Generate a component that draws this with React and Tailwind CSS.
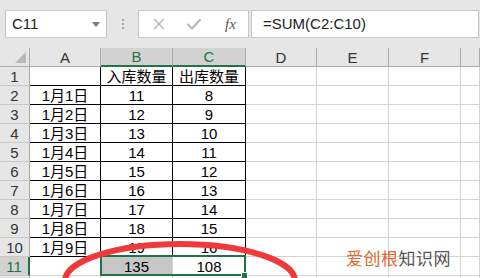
import React from "react";

const cols = ["A", "B", "C", "D", "E", "F", ""];

const data = {
  1: ["", "入库数量", "出库数量"],
  2: ["1月1日", "11", "8"],
  3: ["1月2日", "12", "9"],
  4: ["1月3日", "13", "10"],
  5: ["1月4日", "14", "11"],
  6: ["1月5日", "15", "12"],
  7: ["1月6日", "16", "13"],
  8: ["1月7日", "17", "14"],
  9: ["1月8日", "18", "15"],
  10: ["1月9日", "19", "16"],
  11: ["", "135", "108"],
};

const font = { fontFamily: '"Liberation Sans", "Noto Sans CJK SC", sans-serif' };

function ColHeader({ label }) {
  const selected = label === "B" || label === "C";
  return (
    <div
      className={
        selected
          ? "h-[19px] bg-[#d2d2d2] text-[#217346] border-r border-r-[#ababab] border-b-2 border-b-[#217346] flex items-center justify-center text-[15px] leading-none"
          : "h-[19px] bg-[#e6e6e6] text-[#333] border-r border-r-[#ababab] border-b border-b-[#ababab] flex items-center justify-center text-[15px] leading-none"
      }
    >
      {label}
    </div>
  );
}

function RowHeader({ r }) {
  const selected = r === 11;
  return (
    <div
      className={
        selected
          ? "h-[19px] bg-[#d2d2d2] text-[#217346] border-r-2 border-r-[#217346] border-b border-b-[#c8c8c8] flex items-center justify-center text-[15px] leading-none"
          : "h-[19px] bg-[#e6e6e6] text-[#333] border-r border-r-[#ababab] border-b border-b-[#c8c8c8] flex items-center justify-center text-[15px] leading-none"
      }
    >
      {r <= 11 ? r : ""}
    </div>
  );
}

function Cell({ r, c }) {
  const inTable = r >= 1 && r <= 10 && c <= 2;
  const text = data[r] && c <= 2 ? data[r][c] : "";
  const gray = r === 11 && c === 1;
  return (
    <div
      className={
        (inTable
          ? "border-r border-b border-r-black border-b-black "
          : "border-r border-b border-r-[#d4d4d4] border-b-[#d4d4d4] ") +
        (gray ? "bg-[#c6c6c6] " : "bg-white ") +
        "h-[19px] flex items-center justify-center text-[15px] leading-none text-black"
      }
    >
      {text}
    </div>
  );
}

export default function App() {
  const rows = [1, 2, 3, 4, 5, 6, 7, 8, 9, 10, 11, 12];
  return (
    <div className="relative w-[480px] h-[278px] overflow-hidden bg-white" style={font}>
      {/* Formula bar */}
      <div className="h-[48px] bg-[#e6e6e6] flex items-start pt-[10px] pl-[5px]">
        <div className="w-[102px] h-[28px] bg-white border border-[#c6c6c6] flex items-center justify-between pl-[6px] pr-[6px]">
          <span className="text-[15px] text-[#222]">C11</span>
          <span className="w-0 h-0 border-l-[4px] border-r-[4px] border-t-[5px] border-l-transparent border-r-transparent border-t-[#777]" />
        </div>
        <div className="w-[31px] h-[28px] flex flex-col items-center justify-center gap-[2px]">
          <span className="w-[2px] h-[2px] bg-[#a0a0a0]" />
          <span className="w-[2px] h-[2px] bg-[#a0a0a0]" />
          <span className="w-[2px] h-[2px] bg-[#a0a0a0]" />
        </div>
        <div className="w-[111px] h-[28px] bg-white border border-[#c6c6c6] flex items-center pl-[13px] gap-[20px]">
          <svg width="14" height="14" viewBox="0 0 14 14">
            <path d="M2 2 L12 12 M12 2 L2 12" stroke="#b4b4b4" strokeWidth="1.4" />
          </svg>
          <svg width="16" height="14" viewBox="0 0 16 14">
            <path d="M1.5 7 L6 11.5 L14.5 2.5" stroke="#b4b4b4" strokeWidth="2" fill="none" />
          </svg>
          <span className="text-[15px] italic text-[#555] ml-[3px]" style={{ fontFamily: '"Liberation Serif", serif' }}>
            fx
          </span>
        </div>
        <div className="w-[228px] h-[28px] ml-[2px] bg-white border border-[#c6c6c6] flex items-center pl-[11px]">
          <span className="text-[15px] text-[#222]">=SUM(C2:C10)</span>
        </div>
      </div>

      {/* Grid */}
      <div className="relative grid grid-cols-[30px_71px_72px_73px_71px_72px_72px_1fr]">
        <div className="h-[19px] bg-[#e6e6e6] border-r border-b border-[#ababab] relative">
          <svg className="absolute right-[3px] bottom-[3px]" width="11" height="11" viewBox="0 0 11 11">
            <path d="M11 0 L11 11 L0 11 Z" fill="#b8b8b8" />
          </svg>
        </div>
        {cols.map((c, i) => (
          <ColHeader key={i} label={c} />
        ))}
        {rows.map((r) => (
          <React.Fragment key={r}>
            <RowHeader r={r} />
            {cols.map((_, c) => (
              <Cell key={c} r={r} c={c} />
            ))}
          </React.Fragment>
        ))}

        {/* selection */}
        <div className="absolute left-[100px] top-[207px] w-[146px] h-[21px] border-2 border-[#217346]" />
        <div className="absolute left-[241px] top-[224px] w-[7px] h-[7px] bg-[#217346] border border-white" />
      </div>

      {/* red hand-drawn ellipse */}
      <svg className="absolute left-0 top-0" width="480" height="278" viewBox="0 0 480 278">
        <ellipse cx="180" cy="281" rx="115" ry="37" fill="none" stroke="#f03a3a" strokeWidth="6" />
      </svg>

      {/* watermark */}
      <div className="absolute left-[346px] top-[249px] text-[17px] leading-none tracking-[0.5px]" style={{ fontFamily: '"Noto Sans CJK SC", sans-serif' }}>
        <span className="text-[#e2652a]">爱创根</span>
        <span className="text-[#555]">知识网</span>
      </div>
    </div>
  );
}
